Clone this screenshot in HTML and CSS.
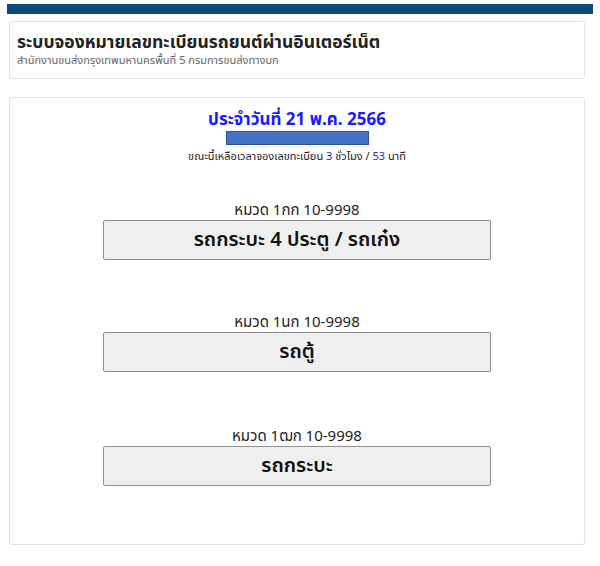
FILE: index.html
```html
<!DOCTYPE html>
<html lang="th">
<head>
<meta charset="utf-8">
<link rel="stylesheet" href="styles.css">
</head>
<body>
<div class="topbar"></div>
<div class="card head">
  <div class="title">ระบบจองหมายเลขทะเบียนรถยนต์ผ่านอินเตอร์เน็ต</div>
  <div class="sub">สำนักงานขนส่งกรุงเทพมหานครพื้นที่ 5 กรมการขนส่งทางบก</div>
</div>
<div class="card main">
  <div class="date">ประจำวันที่ 21 พ.ค. 2566</div>
  <div class="bar"></div>
  <div class="remain">ขณะนี้เหลือเวลาจองเลขทะเบียน <span class="num">3</span> ชั่วโมง / <span class="num">53</span> นาที</div>
  <div class="group">
    <div class="label">หมวด 1กก 10-9998</div>
    <button class="btn">รถกระบะ 4 ประตู / รถเก๋ง</button>
  </div>
  <div class="group">
    <div class="label">หมวด 1นก 10-9998</div>
    <button class="btn">รถตู้</button>
  </div>
  <div class="group">
    <div class="label">หมวด 1ฒก 10-9998</div>
    <button class="btn">รถกระบะ</button>
  </div>
</div>
</body>
</html>
```
FILE: styles.css
```css
body {
  margin: 0;
  font-family: "Noto Sans", "Noto Sans Thai", "Liberation Sans", sans-serif;
  background: #fff;
  color: #222;
}
.topbar {
  margin: 4px 7px 0 7px;
  height: 10px;
  background: #0d4a77;
}
.card {
  border: 1px solid #e2e2e2;
  border-radius: 3px;
  margin-left: 9px;
  margin-right: 15px;
  box-sizing: border-box;
}
.head {
  margin-top: 7px;
  height: 58px;
  padding: 8px 7px 0 7px;
}
.title {
  font-size: 17.5px;
  font-weight: bold;
  color: #222;
  line-height: 22px;
}
.sub {
  font-size: 11px;
  color: #666;
  line-height: 16px;
}
.main {
  margin-top: 18px;
  height: 448px;
  padding-top: 9px;
  display: flex;
  flex-direction: column;
  align-items: center;
}
.date {
  font-size: 17px;
  font-weight: bold;
  color: #1a1aff;
  line-height: 24px;
}
.bar {
  width: 143px;
  height: 14px;
  background: #4472c4;
  border: 1px solid #2f528f;
  box-sizing: border-box;
  margin-top: 0;
}
.remain {
  font-size: 11px;
  color: #222;
  line-height: 16px;
  margin-top: 3px;
}
.num { color: #1f1fd6; }
.group {
  display: flex;
  flex-direction: column;
  align-items: center;
  margin-top: 34px;
}
.group + .group { margin-top: 50px; }
.group:last-child { margin-top: 52px; }
.label {
  font-size: 15px;
  line-height: 22px;
  color: #222;
}
.btn {
  width: 388px;
  height: 40px;
  background: #efefef;
  border: 1px solid #8f8f8f;
  border-radius: 2px;
  font-family: inherit;
  font-size: 20px;
  font-weight: 600;
  color: #111;
  padding: 0;
}
```
